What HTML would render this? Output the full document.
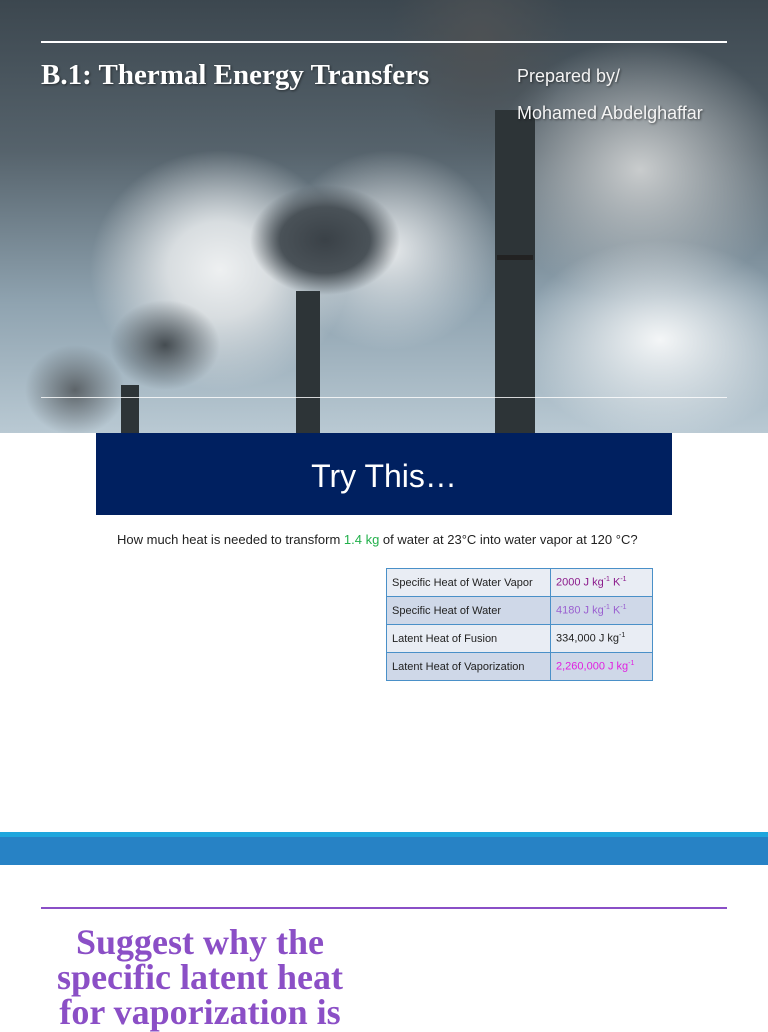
<!DOCTYPE html>
<html><head><meta charset="utf-8"><style>
*{margin:0;padding:0;box-sizing:border-box}
body{width:768px;height:1024px;overflow:hidden;background:#fff;font-family:"Liberation Sans",sans-serif;position:relative}
.hero{position:absolute;left:0;top:0;width:768px;height:433px;overflow:hidden;
background:
radial-gradient(ellipse 75px 55px at 325px 240px,#3a4147 0%,#4a5258 60%,rgba(80,88,94,0) 100%),
radial-gradient(ellipse 55px 45px at 165px 345px,#454c51 0%,rgba(80,88,94,0) 100%),
radial-gradient(ellipse 50px 45px at 75px 390px,#5d6469 0%,rgba(100,108,114,0) 100%),
radial-gradient(ellipse 90px 110px at 480px 40px,#4d5154 0%,rgba(90,94,98,0) 100%),
radial-gradient(ellipse 130px 120px at 220px 270px,#eef0f1 0%,#d8dde0 40%,rgba(200,210,215,0) 100%),
radial-gradient(ellipse 110px 100px at 390px 250px,#e6e9eb 0%,rgba(210,216,220,0) 100%),
radial-gradient(ellipse 140px 100px at 660px 340px,#f4f6f7 0%,rgba(230,235,238,0) 100%),
radial-gradient(ellipse 150px 130px at 640px 170px,#c9cccd 0%,rgba(170,175,178,0) 100%),
linear-gradient(180deg,#3c474f 0%,#56636c 35%,#8fa3b0 70%,#b9c9d3 100%);}
.ch{position:absolute;background:#2d3437}
.line{position:absolute;left:41px;width:686px;height:2px;background:#fff}
h1{position:absolute;left:41px;top:59px;font-family:"Liberation Serif",serif;font-weight:bold;font-size:29px;color:#fff;text-shadow:1px 1px 2px rgba(0,0,0,.5);white-space:nowrap}
.prep{position:absolute;left:517px;color:#f4f4f4;font-size:18px;text-shadow:1px 1px 2px rgba(0,0,0,.5)}
.try{position:absolute;left:96px;top:433px;width:576px;height:82px;background:#002060;color:#fff;font-size:32px;text-align:center;line-height:86px}
.q{position:absolute;left:117px;top:532px;font-size:13px;color:#222;white-space:nowrap}
table{position:absolute;left:386px;top:568px;border-collapse:collapse;font-size:11px}
td{border:1px solid #4a90c8;height:28px;padding:0 5px;color:#222}
td:first-child{width:164px}td:last-child{width:102px}
tr:nth-child(odd) td{background:#e9edf4}tr:nth-child(even) td{background:#cfd8e8}
sup{font-size:7px}
.bar1{position:absolute;left:0;top:832px;width:768px;height:5px;background:#1fa6dd}
.bar2{position:absolute;left:0;top:837px;width:768px;height:28px;background:#2782c5}
.pl{position:absolute;left:41px;top:907px;width:686px;height:2px;background:#8a4fc7}
.sug{position:absolute;left:40px;top:925px;width:320px;text-align:center;font-family:"Liberation Serif",serif;font-weight:bold;font-size:36px;line-height:35px;color:#8b4fc6;white-space:nowrap}
</style></head><body>
<div class="hero">
<div class="ch" style="left:495px;top:110px;width:40px;height:323px"></div>
<div class="ch" style="left:497px;top:255px;width:36px;height:5px;background:#222"></div>
<div class="ch" style="left:296px;top:291px;width:24px;height:142px"></div>
<div class="ch" style="left:121px;top:385px;width:18px;height:48px"></div>
</div>
<div class="line" style="top:41px"></div>
<div class="line" style="top:397px;height:1px;background:rgba(255,255,255,.8)"></div>
<h1>B.1: Thermal Energy Transfers</h1>
<div class="prep" style="top:66px">Prepared by/</div>
<div class="prep" style="top:103px">Mohamed Abdelghaffar</div>
<div class="try">Try This…</div>
<div class="q">How much heat is needed to transform <span style="color:#22b04b">1.4 kg</span> of water at 23°C into water vapor at 120 °C?</div>
<table>
<tr><td>Specific Heat of Water Vapor</td><td style="color:#8b1a8b">2000 J kg<sup>-1</sup> K<sup>-1</sup></td></tr>
<tr><td>Specific Heat of Water</td><td style="color:#9a5fd0">4180 J kg<sup>-1</sup> K<sup>-1</sup></td></tr>
<tr><td>Latent Heat of Fusion</td><td>334,000 J kg<sup>-1</sup></td></tr>
<tr><td>Latent Heat of Vaporization</td><td style="color:#e020e0">2,260,000 J kg<sup>-1</sup></td></tr>
</table>
<div class="bar1"></div><div class="bar2"></div>
<div class="pl"></div>
<div class="sug">Suggest why the<br>specific latent heat<br>for vaporization is</div>
</body></html>
